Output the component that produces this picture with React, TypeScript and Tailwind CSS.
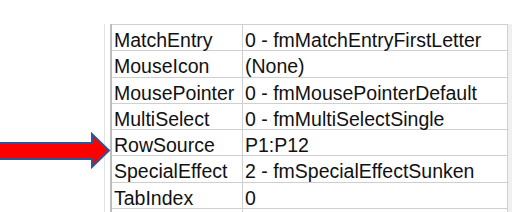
import React from "react";

const rows: [string, string][] = [
  ["MatchEntry", "0 - fmMatchEntryFirstLetter"],
  ["MouseIcon", "(None)"],
  ["MousePointer", "0 - fmMousePointerDefault"],
  ["MultiSelect", "0 - fmMultiSelectSingle"],
  ["RowSource", "P1:P12"],
  ["SpecialEffect", "2 - fmSpecialEffectSunken"],
  ["TabIndex", "0"],
  ["", ""],
];

export default function App() {
  return (
    <div
      className="relative w-[512px] h-[212px] overflow-hidden bg-white flex"
      style={{ fontFamily: '"Liberation Sans", Arial, sans-serif' }}
    >
      <div className="w-[104px] shrink-0" />
      <div className="w-[6px] shrink-0 mt-[24px] border-l border-[#e2e2e2]" />
      <div className="flex-1 mt-[24px] border-l-2 border-[#bdbdbd] flex">
        <div className="w-[396px] border-t border-[#cfcfcf] border-r">
          {rows.map(([k, v], i) => (
            <div
              key={i}
              className="flex h-[26.3px] border-b border-[#cfcfcf] text-[19.5px] text-[#111]"
            >
              <div className="w-[131px] shrink-0 pl-[2px] pt-[3px] leading-[24px] border-r border-[#cfcfcf] whitespace-nowrap">
                {k}
              </div>
              <div className="flex-1 pl-[2px] pt-[3px] leading-[24px] whitespace-nowrap">
                {v}
              </div>
            </div>
          ))}
        </div>
        <div className="w-[4px] bg-[#f0f0f0]" />
      </div>
      <svg
        className="absolute left-0 top-0"
        width="120"
        height="212"
        viewBox="0 0 120 212"
      >
        <polygon
          points="-5,143 92,143 92,134 109,150.5 92,167 92,159 -5,159"
          fill="#ff0000"
          stroke="#2f5597"
          strokeWidth="2"
          strokeLinejoin="miter"
        />
      </svg>
    </div>
  );
}
